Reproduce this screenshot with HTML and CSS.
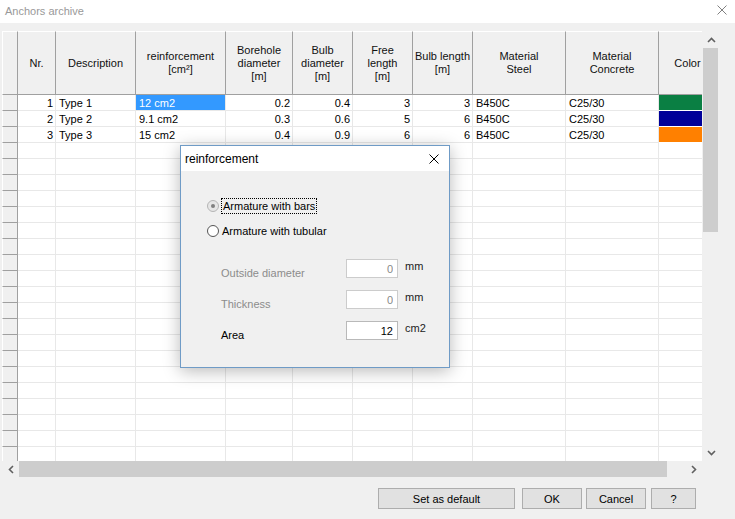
FILE: index.html
```html
<!DOCTYPE html>
<html lang="en">
<head>
  <meta charset="UTF-8">
  <title>Anchors archive</title>
  <link rel="stylesheet" href="styles.css">
</head>
<body>
  <div class="titlebar">
    <span class="title">Anchors archive</span>
    <svg class="close" width="10" height="10" viewBox="0 0 10 10"><path d="M0.5 0.5L9.5 9.5M9.5 0.5L0.5 9.5" stroke="#808080" stroke-width="1"/></svg>
  </div>

  <div class="client">
    <div class="gridbox">
      <div class="grid">
        <table>
          <colgroup>
            <col style="width:16px"><col style="width:38px"><col style="width:80px"><col style="width:90px">
            <col style="width:67px"><col style="width:60px"><col style="width:60px"><col style="width:60px">
            <col style="width:93px"><col style="width:93px"><col style="width:58px">
          </colgroup>
          <thead>
            <tr>
              <th class="rh"></th>
              <th>Nr.</th>
              <th>Description</th>
              <th>reinforcement<br>[cm²]</th>
              <th>Borehole<br>diameter<br>[m]</th>
              <th>Bulb<br>diameter<br>[m]</th>
              <th>Free<br>length<br>[m]</th>
              <th>Bulb length<br>[m]</th>
              <th>Material<br>Steel</th>
              <th>Material<br>Concrete</th>
              <th>Color</th>
            </tr>
          </thead>
          <tbody>
            <tr><th class="rh"></th><td class="num">1</td><td>Type 1</td><td class="sel">12 cm2</td><td class="num">0.2</td><td class="num">0.4</td><td class="num">3</td><td class="num">3</td><td>B450C</td><td>C25/30</td><td class="swatch green"></td></tr>
            <tr><th class="rh"></th><td class="num">2</td><td>Type 2</td><td>9.1 cm2</td><td class="num">0.3</td><td class="num">0.6</td><td class="num">5</td><td class="num">6</td><td>B450C</td><td>C25/30</td><td class="swatch blue"></td></tr>
            <tr><th class="rh"></th><td class="num">3</td><td>Type 3</td><td>15 cm2</td><td class="num">0.4</td><td class="num">0.9</td><td class="num">6</td><td class="num">6</td><td>B450C</td><td>C25/30</td><td class="swatch orange"></td></tr>
            <tr><th class="rh"></th><td></td><td></td><td></td><td></td><td></td><td></td><td></td><td></td><td></td><td></td></tr>
            <tr><th class="rh"></th><td></td><td></td><td></td><td></td><td></td><td></td><td></td><td></td><td></td><td></td></tr>
            <tr><th class="rh"></th><td></td><td></td><td></td><td></td><td></td><td></td><td></td><td></td><td></td><td></td></tr>
            <tr><th class="rh"></th><td></td><td></td><td></td><td></td><td></td><td></td><td></td><td></td><td></td><td></td></tr>
            <tr><th class="rh"></th><td></td><td></td><td></td><td></td><td></td><td></td><td></td><td></td><td></td><td></td></tr>
            <tr><th class="rh"></th><td></td><td></td><td></td><td></td><td></td><td></td><td></td><td></td><td></td><td></td></tr>
            <tr><th class="rh"></th><td></td><td></td><td></td><td></td><td></td><td></td><td></td><td></td><td></td><td></td></tr>
            <tr><th class="rh"></th><td></td><td></td><td></td><td></td><td></td><td></td><td></td><td></td><td></td><td></td></tr>
            <tr><th class="rh"></th><td></td><td></td><td></td><td></td><td></td><td></td><td></td><td></td><td></td><td></td></tr>
            <tr><th class="rh"></th><td></td><td></td><td></td><td></td><td></td><td></td><td></td><td></td><td></td><td></td></tr>
            <tr><th class="rh"></th><td></td><td></td><td></td><td></td><td></td><td></td><td></td><td></td><td></td><td></td></tr>
            <tr><th class="rh"></th><td></td><td></td><td></td><td></td><td></td><td></td><td></td><td></td><td></td><td></td></tr>
            <tr><th class="rh"></th><td></td><td></td><td></td><td></td><td></td><td></td><td></td><td></td><td></td><td></td></tr>
            <tr><th class="rh"></th><td></td><td></td><td></td><td></td><td></td><td></td><td></td><td></td><td></td><td></td></tr>
            <tr><th class="rh"></th><td></td><td></td><td></td><td></td><td></td><td></td><td></td><td></td><td></td><td></td></tr>
            <tr><th class="rh"></th><td></td><td></td><td></td><td></td><td></td><td></td><td></td><td></td><td></td><td></td></tr>
            <tr><th class="rh"></th><td></td><td></td><td></td><td></td><td></td><td></td><td></td><td></td><td></td><td></td></tr>
            <tr><th class="rh"></th><td></td><td></td><td></td><td></td><td></td><td></td><td></td><td></td><td></td><td></td></tr>
            <tr><th class="rh"></th><td></td><td></td><td></td><td></td><td></td><td></td><td></td><td></td><td></td><td></td></tr>
            <tr><th class="rh"></th><td></td><td></td><td></td><td></td><td></td><td></td><td></td><td></td><td></td><td></td></tr>
          </tbody>
        </table>
      </div>

      <!-- vertical scrollbar -->
      <div class="vscroll">
        <div class="arrow"><svg width="9" height="6" viewBox="0 0 9 6"><path d="M1 5L4.5 1.5L8 5" fill="none" stroke="#606060" stroke-width="1.6"/></svg></div>
        <div class="vthumb"></div>
        <div class="track"></div>
        <div class="arrow"><svg width="9" height="6" viewBox="0 0 9 6"><path d="M1 1L4.5 4.5L8 1" fill="none" stroke="#606060" stroke-width="1.6"/></svg></div>
      </div>

      <!-- horizontal scrollbar -->
      <div class="hscroll">
        <div class="arrow"><svg width="6" height="9" viewBox="0 0 6 9"><path d="M5 1L1.5 4.5L5 8" fill="none" stroke="#606060" stroke-width="1.6"/></svg></div>
        <div class="hthumb"></div>
        <div class="track"></div>
        <div class="arrow"><svg width="6" height="9" viewBox="0 0 6 9"><path d="M1 1L4.5 4.5L1 8" fill="none" stroke="#606060" stroke-width="1.6"/></svg></div>
      </div>
      <div class="corner"></div>
    </div>

    <div class="buttons">
      <button class="btn wide">Set as default</button>
      <button class="btn ok">OK</button>
      <button class="btn cancel">Cancel</button>
      <button class="btn help">?</button>
    </div>
  </div>

  <!-- modal dialog over the grid -->
  <div class="dialog">
    <div class="dtitle">
      <span>reinforcement</span>
      <svg width="10" height="10" viewBox="0 0 10 10"><path d="M0.5 0.5L9.5 9.5M9.5 0.5L0.5 9.5" stroke="#000" stroke-width="1"/></svg>
    </div>
    <div class="dbody">
      <div class="radio">
        <span class="dot checked"></span>
        <span class="focus">Armature with bars</span>
      </div>
      <div class="radio second">
        <span class="dot"></span>
        <span>Armature with tubular</span>
      </div>

      <div class="fields">
        <span class="label disabled">Outside diameter</span>
        <input class="edit disabled" type="text" value="0" readonly>
        <span class="unit">mm</span>

        <span class="label disabled">Thickness</span>
        <input class="edit disabled" type="text" value="0" readonly>
        <span class="unit">mm</span>

        <span class="label">Area</span>
        <input class="edit" type="text" value="12" readonly>
        <span class="unit">cm2</span>
      </div>
    </div>
  </div>
</body>
</html>
```

FILE: styles.css
```css
* {
  box-sizing: border-box;
}
body {
  margin: 0;
  width: 735px;
  height: 519px;
  overflow: hidden;
  position: relative;
  background-color: #f0f0f0;
  font-family: "Liberation Sans", Arial, sans-serif;
  font-size: 11px;
  color: #000;
}

/* window title */
.titlebar {
  height: 23px;
  background-color: #fff;
  display: flex;
  align-items: center;
  justify-content: space-between;
  padding: 0 8px 0 5px;
}
.titlebar .title {
  color: #999;
  margin-top: -2px;
}
.titlebar .close {
  margin-top: -3px;
}

.client {
  padding: 8px 0 0 2px;
}

/* grid + scrollbars */
.gridbox {
  display: grid;
  grid-template-columns: 700px 17px;
  grid-template-rows: 430px 16px;
}
.grid {
  overflow: hidden;
  background-color: #fff;
}
table {
  table-layout: fixed;
  width: 715px;
  border-collapse: separate;
  border-spacing: 0;
}
th, td {
  height: 16px;
  padding: 0 2px 0 3px;
  border-right: 1px solid #e8e8e8;
  border-bottom: 1px solid #e8e8e8;
  white-space: nowrap;
  overflow: hidden;
  font-weight: normal;
  line-height: 14px;
  text-align: left;
}
thead th {
  height: 64px;
  background-color: #f0f0f0;
  border-right-color: #a0a0a0;
  border-bottom-color: #a0a0a0;
  border-top: 1px solid #fff;
  text-align: center;
  line-height: 13px;
  padding: 0 1px;
  color: #111;
}
th.rh {
  background-color: #f0f0f0;
  border-right: 1px solid #a0a0a0;
  border-bottom: 1px solid #a0a0a0;
  border-left: 1px solid #fff;
  padding: 0;
}
td.num {
  text-align: right;
}
td.sel {
  background-color: #3399ff;
  color: #fff;
}
td.swatch {
  border-bottom-color: #fff;
}
td.green {
  background-color: #0a7f43;
}
td.blue {
  background-color: #000099;
}
td.orange {
  background-color: #ff8000;
}

.vscroll {
  display: flex;
  flex-direction: column;
  padding-left: 1px;
}
.vscroll .arrow {
  height: 17px;
  display: flex;
  align-items: center;
  justify-content: center;
}
.vthumb {
  height: 184px;
  width: 15px;
  background-color: #cdcdcd;
}
.track {
  flex: 1;
}
.hscroll {
  display: flex;
}
.hscroll .arrow {
  width: 17px;
  display: flex;
  align-items: center;
  justify-content: center;
}
.hthumb {
  width: 648px;
  background-color: #cdcdcd;
}

/* bottom buttons */
.buttons {
  display: flex;
  justify-content: flex-end;
  padding: 11px 39px 0 0;
}
.btn {
  height: 21px;
  margin-left: 5px;
  background-color: #e1e1e1;
  border: 1px solid #adadad;
  font-family: "Liberation Sans", Arial, sans-serif;
  font-size: 11px;
  color: #000;
  padding: 0;
}
.btn.wide {
  width: 137px;
}
.btn.ok {
  width: 60px;
  margin-left: 7px;
}
.btn.cancel {
  width: 60px;
  margin-left: 4px;
}
.btn.help {
  width: 45px;
}

/* reinforcement dialog */
.dialog {
  position: absolute;
  left: 180px;
  top: 145px;
  width: 270px;
  height: 223px;
  border: 1px solid #6f9bc6;
  background-color: #f0f0f0;
  box-shadow: 0 3px 16px rgba(0, 0, 0, 0.28);
}
.dtitle {
  height: 25px;
  background-color: #fff;
  display: flex;
  align-items: center;
  justify-content: space-between;
  padding: 0 10px 0 4px;
  font-size: 12px;
}
.dbody {
  padding: 26px 0 0 26px;
}
.radio {
  display: flex;
  align-items: center;
  height: 18px;
}
.radio.second {
  margin-top: 7px;
}
.dot {
  width: 12px;
  height: 12px;
  border-radius: 50%;
  border: 1px solid #555;
  background-color: #fff;
  margin-right: 3px;
  display: flex;
  align-items: center;
  justify-content: center;
}
.dot.checked {
  border-color: #b5b5b5;
  background-color: #e6e6e6;
}
.dot.checked::after {
  content: "";
  width: 4px;
  height: 4px;
  border-radius: 50%;
  background-color: #808080;
}
.focus {
  outline: 1px dotted #000;
  padding: 0 1px;
  line-height: 14px;
}

.fields {
  display: grid;
  grid-template-columns: 125px 52px auto;
  row-gap: 11px;
  margin: 19px 0 0 14px;
  align-items: start;
}
.fields .label {
  padding-top: 8px;
}
.label.disabled {
  color: #8c8c8c;
}
.edit {
  width: 52px;
  height: 19px;
  border: 1px solid #b9b9b9;
  background-color: #fff;
  text-align: right;
  padding: 0 4px 0 0;
  font-family: "Liberation Sans", Arial, sans-serif;
  font-size: 11px;
  color: #000;
}
.edit.disabled {
  color: #888;
  border-color: #cccccc;
}
.unit {
  padding: 1px 0 0 7px;
  color: #222;
}
```
